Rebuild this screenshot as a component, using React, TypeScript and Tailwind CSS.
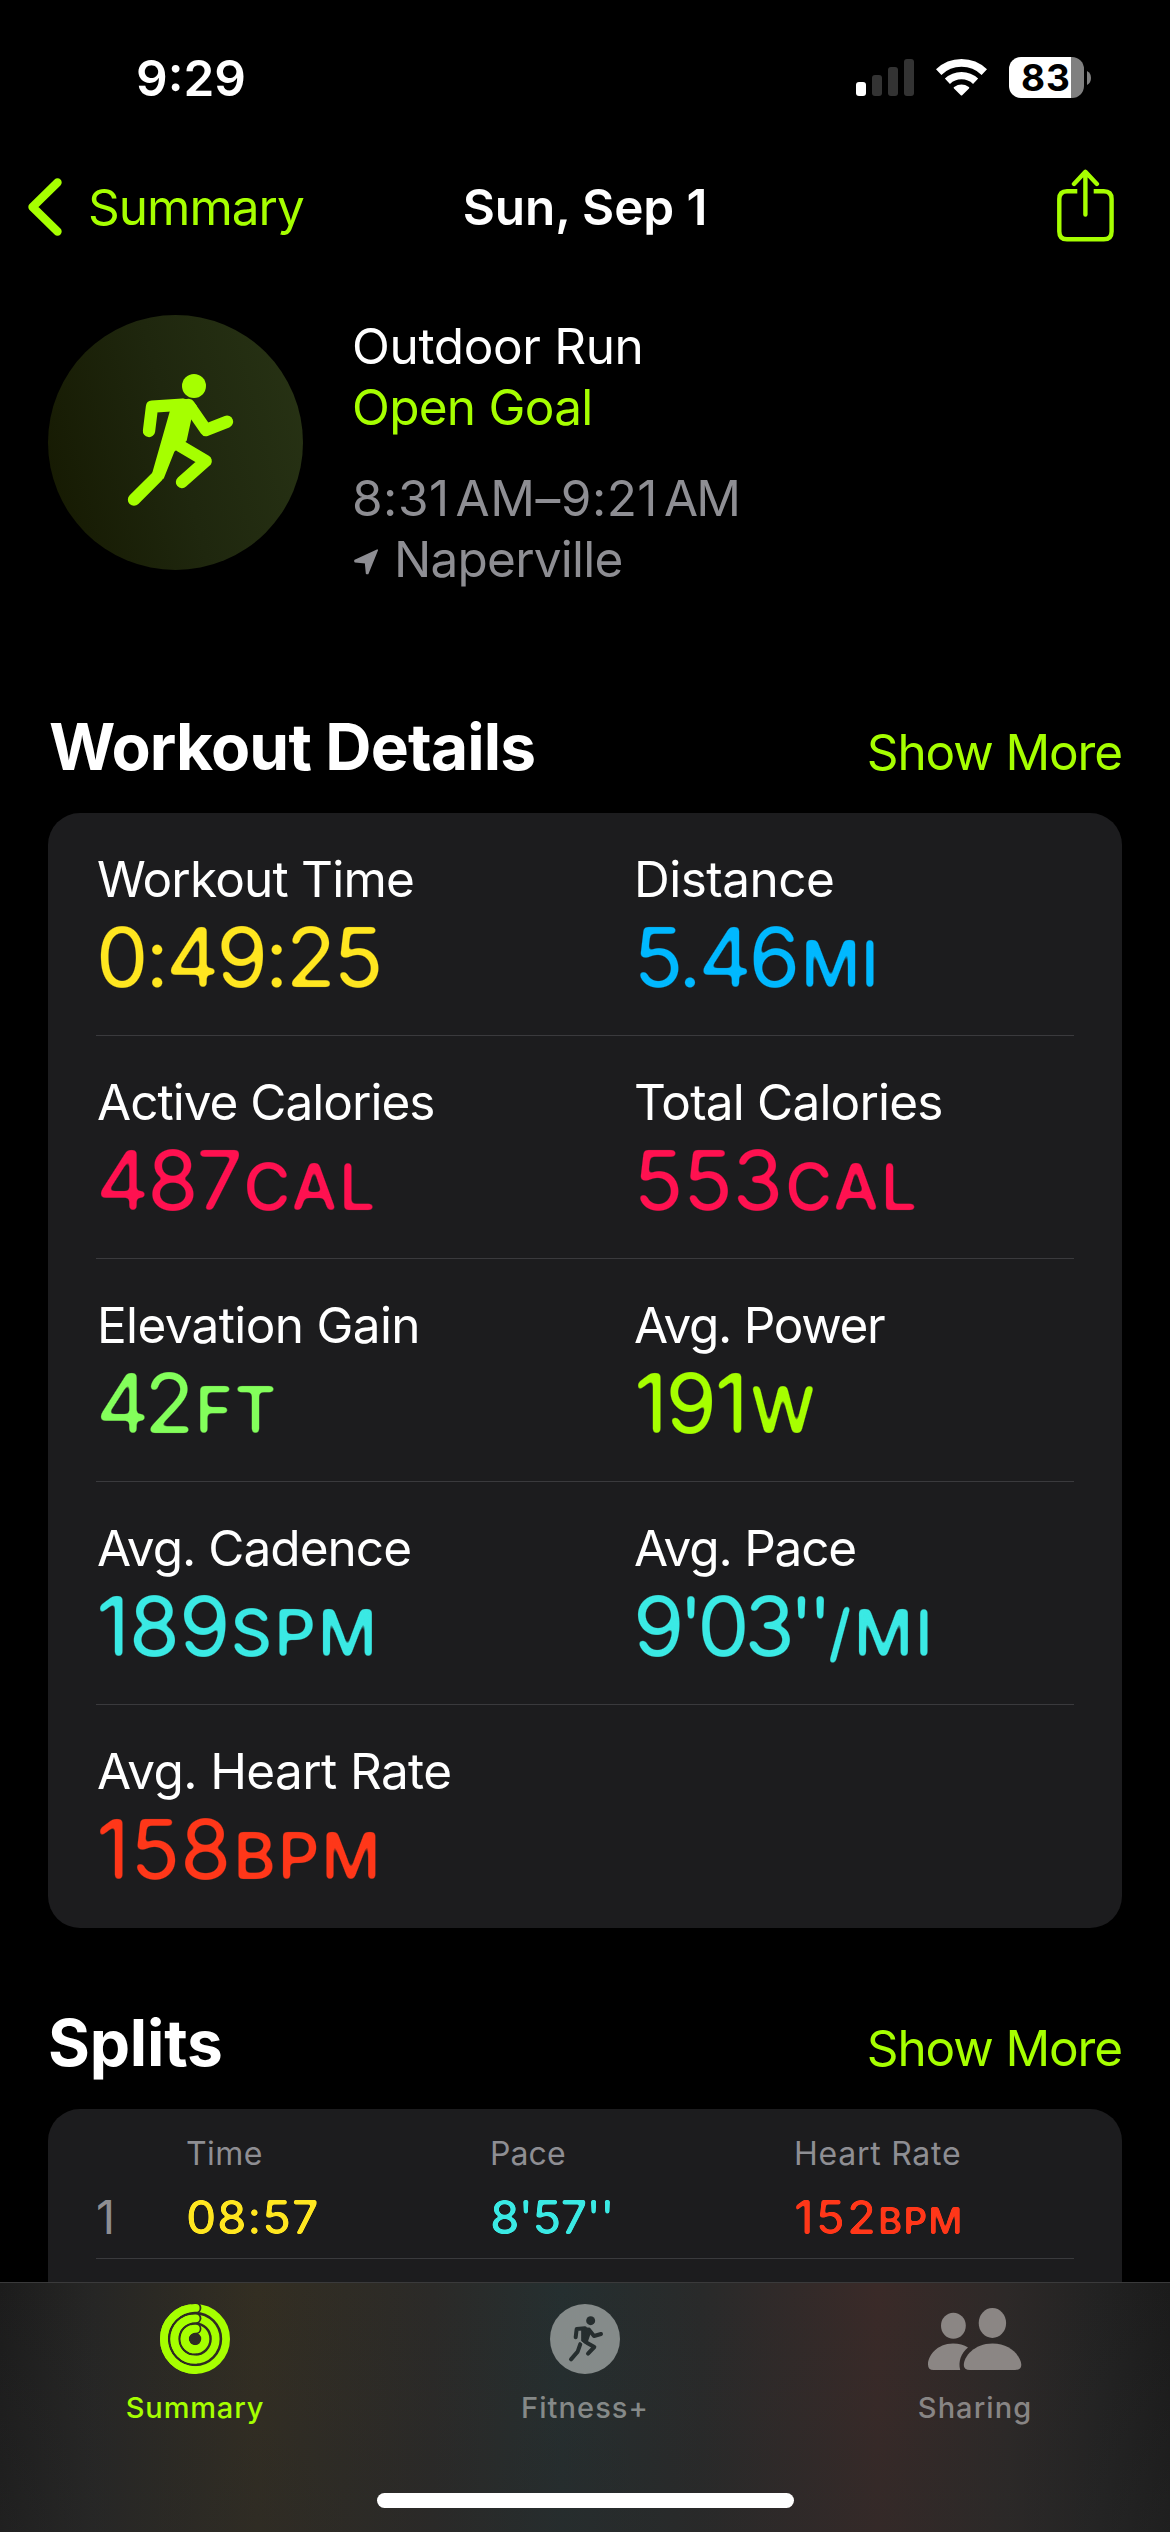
import React from "react";

type Metric = {
  label: string;
  labelClass: string;
  value: string;
  valueClass: string;
  unit?: string;
  unitClass?: string;
  color: string;
};

const metrics: Metric[] = [
  { label: "Workout Time", labelClass: "tracking-[-0.8px] ml-px", value: "0:49:25", valueClass: "tracking-[-3.13px]", color: "text-[#ffe620]" },
  { label: "Distance", labelClass: "tracking-[-0.5px] ml-px", value: "5.46", valueClass: "tracking-[-3.3px]", unit: "MI", unitClass: "ml-[4px] tracking-[0.7px]", color: "text-[#00b8ff]" },
  { label: "Active Calories", labelClass: "tracking-[-0.99px] ml-px", value: "487", valueClass: "tracking-[-2.48px]", unit: "CAL", unitClass: "ml-[3px] tracking-[1.59px]", color: "text-[#ff1150]" },
  { label: "Total Calories", labelClass: "tracking-[-0.81px] ml-px", value: "553", valueClass: "tracking-[-1.01px]", unit: "CAL", unitClass: "ml-[3px] tracking-[1.59px]", color: "text-[#ff1150]" },
  { label: "Elevation Gain", labelClass: "tracking-[-0.65px] ml-px", value: "42", valueClass: "tracking-[-5.62px]", unit: "FT", unitClass: "ml-[6px] tracking-[0.99px]", color: "text-[#83ff5b]" },
  { label: "Avg. Power", labelClass: "tracking-[-1.3px] ml-px", value: "191", valueClass: "ml-px tracking-[-2.21px]", unit: "W", unitClass: "ml-[4px] tracking-[-1px]", color: "text-[#a6ff00]" },
  { label: "Avg. Cadence", labelClass: "tracking-[-0.97px] ml-px", value: "189", valueClass: "tracking-[-1.1px]", unit: "SPM", unitClass: "ml-px tracking-[1.9px]", color: "text-[#3ae9e4]" },
  { label: "Avg. Pace", labelClass: "tracking-[-1.2px] ml-px", value: "9'03''", valueClass: "tracking-[-6px]", unit: "/MI", unitClass: "ml-px tracking-[1.9px]", color: "text-[#3ae9e4]" },
  { label: "Avg. Heart Rate", labelClass: "tracking-[-0.61px] ml-px", value: "158", valueClass: "tracking-[-0.11px]", unit: "BPM", unitClass: "ml-[2px] tracking-[1.8px]", color: "text-[#ff3719]" },
];

function RoundingFilters() {
  return (
    <svg className="absolute h-0 w-0" aria-hidden="true">
      <filter id="round-lg" colorInterpolationFilters="sRGB">
        <feGaussianBlur stdDeviation="2" />
        <feComponentTransfer>
          <feFuncA type="linear" slope="5" intercept="-2" />
        </feComponentTransfer>
      </filter>
      <filter id="round-sm" colorInterpolationFilters="sRGB">
        <feGaussianBlur stdDeviation="1.2" />
        <feComponentTransfer>
          <feFuncA type="linear" slope="4" intercept="-1.5" />
        </feComponentTransfer>
      </filter>
    </svg>
  );
}

function SignalIcon() {
  return (
    <svg width="58" height="37" viewBox="0 0 58 37">
      <rect x="0" y="23" width="10" height="14" rx="3" fill="#fff" />
      <rect x="16" y="16" width="10" height="21" rx="3" fill="#333" />
      <rect x="32" y="8" width="10" height="29" rx="3" fill="#333" />
      <rect x="48" y="0" width="10" height="37" rx="3" fill="#333" />
    </svg>
  );
}

function WifiIcon() {
  return (
    <svg width="51" height="37" viewBox="0 0 51 37" fill="none" stroke="#fff">
      <path d="M2.7 13.1A33 33 0 0 1 48.3 13.1" strokeWidth="7.8" />
      <path d="M11.4 22.2A20.5 20.5 0 0 1 39.6 22.2" strokeWidth="7.4" />
      <path d="M25.5 35.5L18.7 28.8Q25.5 24.2 32.3 28.8Z" fill="#fff" strokeWidth="2" strokeLinejoin="round" />
    </svg>
  );
}

function Battery() {
  return (
    <div className="flex items-center">
      <div className="h-[41px] w-[75px] rounded-[12px] bg-[linear-gradient(90deg,#fff_62px,#808080_62px)] pl-[12px] text-[37px] leading-[41px] font-bold tracking-[0.9px] text-black">
        83
      </div>
      <svg className="ml-[3px]" width="4" height="14" viewBox="0 0 4 14">
        <path d="M0 0Q4 2 4 7T0 14Z" fill="#808080" />
      </svg>
    </div>
  );
}

function ShareIcon() {
  return (
    <svg width="57" height="73" viewBox="0 0 57 73" fill="none" stroke="#a6ff00" strokeWidth="4.4">
      <path d="M20.3 22.2H10Q2.3 22.2 2.3 30V62.5Q2.3 70.3 10 70.3H46.8Q54.6 70.3 54.6 62.5V30Q54.6 22.2 46.8 22.2H36.7" />
      <path d="M28.4 3V45.5M17 15L28.4 2.8L39.9 15" strokeLinecap="round" strokeLinejoin="round" />
    </svg>
  );
}

function RunnerIcon() {
  return (
    <svg width="120" height="150" viewBox="0 0 360 450" fill="none" stroke="#a6ff00" strokeWidth="37" strokeLinecap="round" strokeLinejoin="round">
      <circle cx="222" cy="63" r="36" fill="#a6ff00" stroke="none" />
      <path d="M87 198L96 125L188 119" />
      <path d="M206 120L258 195L321 170" />
      <path d="M181 243L257 288L186 351" />
      <path d="M113 333L42 404" />
      <path d="M152 130L188 101Q215 100 230 122L214 163L200 227L163 260L131 341L96 326Z" fill="#a6ff00" stroke="none" />
    </svg>
  );
}

function RingsIcon() {
  const rings = [
    { r: 31.1, w: 7.8 },
    { r: 20.7, w: 7.8 },
    { r: 10.3, w: 8.1 },
  ];
  return (
    <svg width="70" height="70" viewBox="0 0 70 70">
      <mask id="rings">
        {rings.map(({ r, w }) => (
          <g key={r} fill="none" stroke="#fff" strokeWidth={w}>
            <circle cx="35" cy="35" r={r} />
            <circle cx="35.7" cy={35 - r} r="5.7" fill="#000" stroke="none" />
            <path d={`M35 ${35 + r}A${r} ${r} 0 0 1 35 ${35 - r}H35.7`} strokeLinecap="round" />
          </g>
        ))}
      </mask>
      <rect width="70" height="70" fill="#a6ff00" mask="url(#rings)" />
    </svg>
  );
}

function FitnessIcon() {
  return (
    <svg width="70" height="70" viewBox="15 18 210 210">
      <mask id="fitness">
        <circle cx="120" cy="123" r="105" fill="#fff" />
        <g fill="none" stroke="#000" strokeWidth="12" strokeLinecap="round" strokeLinejoin="round">
          <circle cx="137" cy="68" r="13.5" fill="#000" stroke="none" />
          <path d="M92 118L95 93L120 91" />
          <path d="M132 95L147 114L168 108" />
          <path d="M120 131L148 147L129 167" />
          <path d="M106 138L98 161L78 184" />
          <path d="M112 92L128 92Q134 94 136 100L128 122L124 134L112 128Z" fill="#000" strokeWidth="7" />
          <path d="M101 126L121 142" stroke="#fff" strokeWidth="4" />
        </g>
      </mask>
      <rect x="15" y="18" width="210" height="210" fill="#858b8a" mask="url(#fitness)" />
    </svg>
  );
}

function SharingIcon() {
  return (
    <svg width="94" height="62" viewBox="0 0 94 62" fill="#8b8684">
      <ellipse cx="25.4" cy="17.8" rx="12.4" ry="13" />
      <ellipse cx="64.4" cy="15" rx="13.7" ry="15" />
      <path d="M5.5 62Q0 62 0 56.5C0 48 9 35.6 25 35.6C31 35.6 36 37 40 39.5C33 45.5 30 53.5 32.2 62Z" />
      <path d="M42 62Q35.8 62 35.8 57C35.8 49 46 35.6 64.5 35.6C83 35.6 93.3 49 93.3 57Q93.3 62 87 62Z" />
    </svg>
  );
}

function MetricCell({ m }: { m: Metric }) {
  return (
    <div className="pt-9">
      <div className={`text-[49.5px] leading-[60px] whitespace-nowrap ${m.labelClass}`}>{m.label}</div>
      <div className={`mt-[6px] flex items-baseline text-[83px] leading-[84px] whitespace-nowrap [filter:url(#round-lg)] ${m.color}`}>
        <span className={m.valueClass}>{m.value}</span>
        {m.unit && <span className={`text-[65px] font-medium ${m.unitClass}`}>{m.unit}</span>}
      </div>
    </div>
  );
}

function SectionHeader({ title, titleClass }: { title: string; titleClass: string }) {
  return (
    <div className="flex shrink-0 items-baseline justify-between px-12">
      <h2 className={`text-[64px] leading-[76px] font-bold ${titleClass}`}>{title}</h2>
      <button className="text-[49.5px] leading-[60px] tracking-[-1.12px] text-[#a6ff00]">Show More</button>
    </div>
  );
}

export default function App() {
  const rows = [0, 2, 4, 6, 8].map((i) => metrics.slice(i, i + 2));
  return (
    <div className="flex h-[2532px] w-[1170px] flex-col overflow-hidden bg-black font-['Inter',sans-serif] text-white">
      <RoundingFilters />
      <div className="flex min-h-0 flex-1 flex-col overflow-hidden">
        <div className="flex h-[156px] shrink-0 items-start pt-[48px] pr-[79px] pl-[136px]">
          <div className="flex-1 text-[49.5px] leading-[60px] font-semibold">9:29</div>
          <div className="mt-[9px] flex items-center">
            <SignalIcon />
            <div className="ml-[22px]">
              <WifiIcon />
            </div>
            <div className="ml-[22px]">
              <Battery />
            </div>
          </div>
        </div>

        <div className="grid h-[159px] shrink-0 grid-cols-[1fr_auto_1fr] items-start pt-[13px] pr-[56px] pl-[28px] text-[49.5px] leading-[60px]">
          <button className="mt-[8px] flex items-center gap-[26px] text-[#a6ff00]">
            <svg width="34" height="58" viewBox="0 0 34 58" fill="none">
              <path d="M29.5 4.5L4.5 29L29.5 53.5" stroke="#a6ff00" strokeWidth="8.4" strokeLinecap="round" strokeLinejoin="round" />
            </svg>
            <span className="tracking-[-0.99px]">Summary</span>
          </button>
          <h1 className="mt-[8px] mr-[-28px] font-semibold tracking-[-0.14px]">Sun, Sep 1</h1>
          <div className="justify-self-end">
            <ShareIcon />
          </div>
        </div>

        <div className="flex h-[255px] shrink-0 pl-12 text-[49.5px] leading-[61px] whitespace-nowrap">
          <div className="h-[255px] w-[255px] rounded-full bg-[linear-gradient(75deg,#161a02_5%,#1f270e_50%,#273214_95%)] pt-[50px] pl-[72px]">
            <RunnerIcon />
          </div>
          <div className="mt-px ml-[49px]">
            <div className="tracking-[-0.36px]">Outdoor Run</div>
            <div className="tracking-[-0.72px] text-[#a6ff00]">Open Goal</div>
            <div className="mt-[30px] text-[#8e8e93]">
              <span className="tracking-[0.5px]">8:31</span>
              <span className="ml-[6px] tracking-[0.5px]">AM–9:21</span>
              <span className="ml-[6px] tracking-[-2px]">AM</span>
            </div>
            <div className="flex items-center text-[#8e8e93]">
              <svg className="mt-[4px] ml-[2px]" width="25" height="26" viewBox="0 0 25 26">
                <path d="M23.2 1.2L13.8 24.5L12.6 24.5L11.6 13.6L1 12.6L1 11.4Z" fill="#8e8e93" stroke="#8e8e93" strokeWidth="1.6" strokeLinejoin="round" />
              </svg>
              <span className="ml-[15px] tracking-[-0.78px]">Naperville</span>
            </div>
          </div>
        </div>

        <div className="h-[139px] shrink-0" />
        <SectionHeader title="Workout Details" titleClass="ml-px tracking-[-0.82px]" />
        <div className="mx-12 mt-[28px] shrink-0 rounded-[32px] bg-[#1c1c1e] px-12">
          {rows.map((row, i) => (
            <div
              key={row[0].label}
              className={
                i < rows.length - 1
                  ? "grid h-[223px] grid-cols-[537px_1fr] border-b border-[#3a3a3d]"
                  : "grid h-[223px] grid-cols-[537px_1fr]"
              }
            >
              {row.map((m) => (
                <MetricCell key={m.label} m={m} />
              ))}
            </div>
          ))}
        </div>

        <div className="h-[77px] shrink-0" />
        <SectionHeader title="Splits" titleClass="tracking-[-0.2px]" />
        <div className="mx-12 mt-[28px] h-[240px] shrink-0 rounded-t-[32px] bg-[#1c1c1e] px-12 pt-[25px]">
          <div className="grid grid-cols-[90px_304px_304px_1fr] text-[32px] leading-[40px] text-[#8e8e93]">
            <span />
            <span className="tracking-[0.42px]">Time</span>
            <span className="tracking-[0.1px]">Pace</span>
            <span className="tracking-[0.74px]">Heart Rate</span>
          </div>
          <div className="mt-[13px] grid h-[72px] grid-cols-[90px_304px_304px_1fr] border-b border-[#3a3a3d] text-[47px] leading-[60px]">
            <span className="text-[#8e8e93]">1</span>
            <span className="font-medium tracking-[0.62px] text-[#ffe620] [filter:url(#round-sm)]">08:57</span>
            <span className="font-medium tracking-[-0.98px] text-[#3ae9e4] [filter:url(#round-sm)]">8'57''</span>
            <span className="font-medium tracking-[2.17px] text-[#ff3719] [filter:url(#round-sm)]">
              152<span className="text-[37px] font-semibold tracking-[1.02px]">BPM</span>
            </span>
          </div>
        </div>
      </div>

      <div className="flex h-[250px] shrink-0 flex-col items-center border-t border-[#3a3a3b] bg-[linear-gradient(180deg,rgba(40,40,40,0)_0%,rgba(40,40,40,0.35)_100%),linear-gradient(90deg,#1c1c1c_0%,#262625_8%,#332e22_22%,#2b2a28_37%,#252f30_48%,#292a2a_60%,#3a2a28_75%,#2d2928_86%,#222222_94%,#1b1b1b_100%)]">
        <div className="grid w-full grid-cols-3 pt-[21px] text-[29px] leading-[36px] font-medium">
          <div className="flex flex-col items-center gap-[16px] text-[#a6ff00]">
            <RingsIcon />
            <span className="tracking-[0.86px]">Summary</span>
          </div>
          <div className="flex flex-col items-center gap-[16px] text-[#858988]">
            <FitnessIcon />
            <span className="tracking-[1.09px]">Fitness+</span>
          </div>
          <div className="flex flex-col items-center gap-[16px] text-[#888584]">
            <div className="flex h-[70px] items-center">
              <SharingIcon />
            </div>
            <span className="tracking-[1.05px]">Sharing</span>
          </div>
        </div>
        <div className="mt-[67px] h-[15px] w-[417px] rounded-full bg-white" />
      </div>
    </div>
  );
}
